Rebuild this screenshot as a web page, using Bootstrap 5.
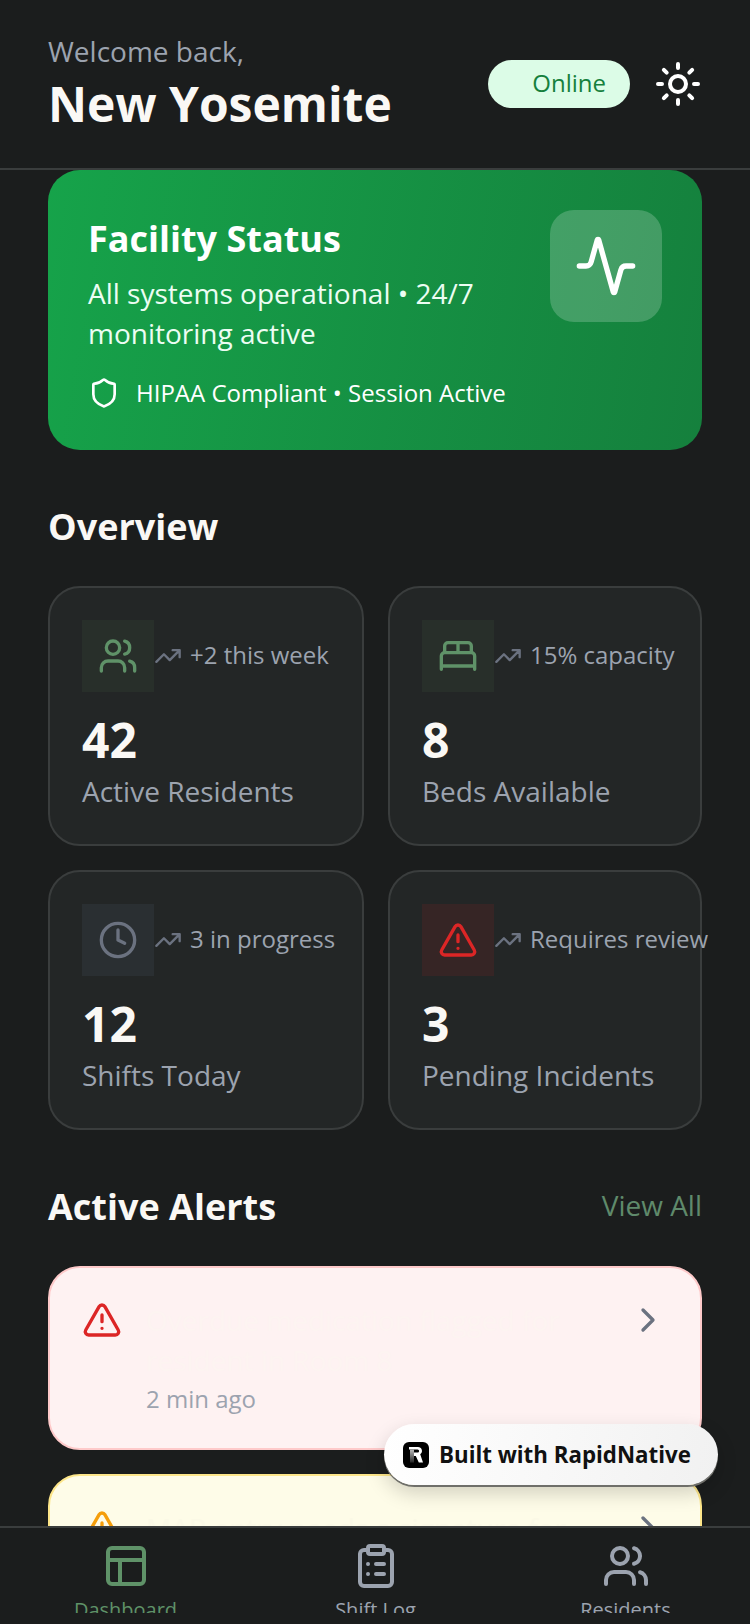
<!DOCTYPE html>
<html lang="en">
<head>
    <meta charset="UTF-8">
    <meta name="viewport" content="width=device-width, initial-scale=1.0">
    <title>New Yosemite Dashboard</title>
    <link rel="stylesheet" href="https://cdn.jsdelivr.net/npm/bootstrap@5.3.0/dist/css/bootstrap.min.css">
    <style>
        body { background: #1b1d1d; font-family: "Open Sans", sans-serif; color: #faf8f5; }
        svg.ico { fill: none; stroke: currentColor; stroke-width: 2; stroke-linecap: round; stroke-linejoin: round; flex-shrink: 0; display: block; }
        .app-shell { height: 1624px; overflow: hidden; }
        .top-head { height: 170px; padding: 31px 48px 0; border-bottom: 2px solid #3a3d3d; }
        .welcome { font-size: 28px; line-height: 40px; color: #9ca3af; }
        .site-name { font-size: 48px; line-height: 66px; font-weight: 700; margin: 0; }
        .head-right { margin-top: 29px; }
        .online-pill { width: 142px; height: 48px; border-radius: 24px; background: #dcfce7; color: #15803d; font-size: 24px; line-height: 46px; text-align: right; padding-right: 24px; }
        .theme-ico { color: #fff; margin-left: 24px; }
        .scroll-area { padding: 0 48px; min-height: 0; }
        .hero { height: 280px; padding: 40px; border-radius: 32px; background: linear-gradient(100deg, #16a34a, #15803d); color: #fff; }
        .hero h2 { font-size: 36px; line-height: 58px; font-weight: 700; margin: 0 0 5px; }
        .hero p { font-size: 28px; line-height: 40px; margin: 0; color: #ecfdf3; }
        .hero-ico { width: 112px; height: 112px; border-radius: 24px; background: rgba(255,255,255,.2); }
        .hipaa { margin-top: 24px; font-size: 24px; line-height: 32px; gap: 16px; }
        .sec-title { font-size: 36px; line-height: 48px; font-weight: 700; margin: 0; }
        .sec-head { margin-top: 53px; margin-bottom: 35px; }
        .stat-grid { display: grid; grid-template-columns: 316px 314px; gap: 24px; }
        .stat-box { height: 260px; padding: 32px; border: 2px solid #3a3d3d; border-radius: 32px; background: #232626; }
        .stat-ico { width: 72px; height: 72px; }
        .tint-green { background: #282f2a; color: #5f9268; }
        .tint-gray { background: #2a2f32; color: #6b7280; }
        .tint-red { background: #362525; color: #dc2626; }
        .trend { color: #6b7280; }
        .trend-text { font-size: 24px; line-height: 32px; color: #9ca3af; margin-left: 8px; margin-bottom: 2px; white-space: nowrap; }
        .stat-num { font-size: 48px; line-height: 64px; font-weight: 700; margin-top: 16px; }
        .stat-label { font-size: 28px; line-height: 40px; color: #9ca3af; margin-top: -1px; }
        .view-all { font-size: 28px; color: #5f8a6b; text-decoration: none; margin-bottom: 4px; }
        .alert-box { padding: 32px; border: 2px solid; border-radius: 32px; margin-bottom: 24px; }
        .alert-red { background: #fef2f2; border-color: #fecaca; color: #dc2626; }
        .alert-amber { background: #fefce8; border-color: #fde68a; color: #f59e0b; }
        .alert-title { font-size: 28px; line-height: 40px; }
        .alert-red .alert-title { color: #fdf4f1; }
        .alert-amber .alert-title { color: #fbf9e6; }
        .alert-time { font-size: 24px; line-height: 32px; color: #9ca3af; margin-top: 3px; margin-bottom: 1px; }
        .alert-chev { color: #6b7280; }
        .tab-bar { height: 98px; border-top: 2px solid #3a3d3d; background: #1b1d1d; flex-shrink: 0; }
        .tab-inner { height: 85px; overflow: hidden; padding: 14px 0 0 1px; }
        .tab-item { width: 249px; color: #9ca3af; font-size: 20px; line-height: 28px; }
        .tab-item.is-on { color: #5f9268; }
        .tab-item span { margin-top: 6px; }
        .built-badge { position: absolute; left: 384px; top: 1424px; width: 334px; height: 61px; border-radius: 31px; background: linear-gradient(100deg, #fff, #f1f1f1); box-shadow: 0 2px 0 #6f6f6a, 0 8px 20px rgba(0,0,0,.18); color: #111; font-size: 22.3px; font-weight: 700; gap: 10px; padding-left: 19px; }
        .built-logo { width: 26px; height: 26px; border-radius: 6px; background: #000; }
    </style>
</head>
<body>
    <div class="app-shell d-flex flex-column position-relative">
        <header class="top-head d-flex justify-content-between align-items-start flex-shrink-0">
            <div>
                <div class="welcome">Welcome back,</div>
                <h1 class="site-name">New Yosemite</h1>
            </div>
            <div class="head-right d-flex align-items-center">
                <div class="online-pill">Online</div>
                <svg class="ico theme-ico" width="48" height="48" viewBox="0 0 24 24"><circle cx="12" cy="12" r="4"/><path d="M12 2v2M12 20v2M4.93 4.93l1.41 1.41M17.66 17.66l1.41 1.41M2 12h2M20 12h2M6.34 17.66l-1.41 1.41M19.07 4.93l-1.41 1.41"/></svg>
            </div>
        </header>

        <main class="scroll-area flex-grow-1 overflow-hidden">
            <section class="hero d-flex justify-content-between align-items-start">
                <div>
                    <h2>Facility Status</h2>
                    <p>All systems operational • 24/7 monitoring active</p>
                    <div class="hipaa d-flex align-items-center">
                        <svg class="ico" width="32" height="32" viewBox="0 0 24 24"><path d="M20 13c0 5-3.5 7.5-7.66 8.95a1 1 0 0 1-.67-.01C7.5 20.5 4 18 4 13V6a1 1 0 0 1 1-1c2 0 4.5-1.2 6.24-2.72a1.17 1.17 0 0 1 1.52 0C14.51 3.81 17 5 19 5a1 1 0 0 1 1 1z"/></svg>
                        HIPAA Compliant • Session Active
                    </div>
                </div>
                <div class="hero-ico d-flex align-items-center justify-content-center flex-shrink-0">
                    <svg class="ico" width="64" height="64" viewBox="0 0 24 24"><path d="M22 12h-2.48a2 2 0 0 0-1.93 1.46l-2.35 8.36a.25.25 0 0 1-.48 0L9.24 2.18a.25.25 0 0 0-.48 0l-2.35 8.36A2 2 0 0 1 4.49 12H2"/></svg>
                </div>
            </section>

            <div class="sec-head"><h2 class="sec-title">Overview</h2></div>
            <div class="stat-grid">
                <div class="stat-box">
                    <div class="d-flex align-items-center">
                        <div class="stat-ico tint-green d-flex align-items-center justify-content-center flex-shrink-0">
                            <svg class="ico" width="40" height="40" viewBox="0 0 24 24"><path d="M16 21v-2a4 4 0 0 0-4-4H6a4 4 0 0 0-4 4v2"/><circle cx="9" cy="7" r="4"/><path d="M22 21v-2a4 4 0 0 0-3-3.87M16 3.13a4 4 0 0 1 0 7.75"/></svg>
                        </div>
                        <svg class="ico trend" width="28" height="28" viewBox="0 0 24 24"><path d="M22 7l-8.5 8.5-5-5L2 17M16 7h6v6"/></svg>
                        <span class="trend-text">+2 this week</span>
                    </div>
                    <div class="stat-num">42</div>
                    <div class="stat-label">Active Residents</div>
                </div>
                <div class="stat-box">
                    <div class="d-flex align-items-center">
                        <div class="stat-ico tint-green d-flex align-items-center justify-content-center flex-shrink-0">
                            <svg class="ico" width="40" height="40" viewBox="0 0 24 24"><path d="M2 20v-8a2 2 0 0 1 2-2h16a2 2 0 0 1 2 2v8M4 10V6a2 2 0 0 1 2-2h12a2 2 0 0 1 2 2v4M12 4v6M2 18h20"/></svg>
                        </div>
                        <svg class="ico trend" width="28" height="28" viewBox="0 0 24 24"><path d="M22 7l-8.5 8.5-5-5L2 17M16 7h6v6"/></svg>
                        <span class="trend-text">15% capacity</span>
                    </div>
                    <div class="stat-num">8</div>
                    <div class="stat-label">Beds Available</div>
                </div>
                <div class="stat-box">
                    <div class="d-flex align-items-center">
                        <div class="stat-ico tint-gray d-flex align-items-center justify-content-center flex-shrink-0">
                            <svg class="ico" width="40" height="40" viewBox="0 0 24 24"><circle cx="12" cy="12" r="10"/><path d="M12 6v6l4 2"/></svg>
                        </div>
                        <svg class="ico trend" width="28" height="28" viewBox="0 0 24 24"><path d="M22 7l-8.5 8.5-5-5L2 17M16 7h6v6"/></svg>
                        <span class="trend-text">3 in progress</span>
                    </div>
                    <div class="stat-num">12</div>
                    <div class="stat-label">Shifts Today</div>
                </div>
                <div class="stat-box">
                    <div class="d-flex align-items-center">
                        <div class="stat-ico tint-red d-flex align-items-center justify-content-center flex-shrink-0">
                            <svg class="ico" width="40" height="40" viewBox="0 0 24 24"><path d="M21.73 18l-8-14a2 2 0 0 0-3.48 0l-8 14A2 2 0 0 0 4 21h16a2 2 0 0 0 1.73-3M12 9v4M12 17h.01"/></svg>
                        </div>
                        <svg class="ico trend" width="28" height="28" viewBox="0 0 24 24"><path d="M22 7l-8.5 8.5-5-5L2 17M16 7h6v6"/></svg>
                        <span class="trend-text">Requires review</span>
                    </div>
                    <div class="stat-num">3</div>
                    <div class="stat-label">Pending Incidents</div>
                </div>
            </div>

            <div class="sec-head d-flex justify-content-between align-items-center">
                <h2 class="sec-title">Active Alerts</h2>
                <a class="view-all" href="#">View All</a>
            </div>
            <div class="alert-box alert-red d-flex align-items-start">
                <svg class="ico" width="40" height="40" viewBox="0 0 24 24"><path d="M21.73 18l-8-14a2 2 0 0 0-3.48 0l-8 14A2 2 0 0 0 4 21h16a2 2 0 0 0 1.73-3M12 9v4M12 17h.01"/></svg>
                <div class="flex-grow-1 ms-4 me-2">
                    <div class="alert-title">Overdue medication flagged for resident in Room 8</div>
                    <div class="alert-time">2 min ago</div>
                </div>
                <svg class="ico alert-chev" width="40" height="40" viewBox="0 0 24 24"><path d="M9 18l6-6-6-6"/></svg>
            </div>
            <div class="alert-box alert-amber d-flex align-items-start">
                <svg class="ico" width="40" height="40" viewBox="0 0 24 24"><path d="M21.73 18l-8-14a2 2 0 0 0-3.48 0l-8 14A2 2 0 0 0 4 21h16a2 2 0 0 0 1.73-3M12 9v4M12 17h.01"/></svg>
                <div class="flex-grow-1 ms-4 me-2">
                    <div class="alert-title">MAR entry needs a signature for Room 3</div>
                </div>
                <svg class="ico alert-chev" width="40" height="40" viewBox="0 0 24 24"><path d="M9 18l6-6-6-6"/></svg>
            </div>
        </main>

        <nav class="tab-bar">
            <div class="tab-inner d-flex justify-content-between">
                <div class="tab-item is-on d-flex flex-column align-items-center">
                    <svg class="ico" width="48" height="48" viewBox="0 0 24 24"><rect x="3" y="3" width="18" height="18" rx="2"/><path d="M3 9h18M9 21V9"/></svg>
                    <span>Dashboard</span>
                </div>
                <div class="tab-item d-flex flex-column align-items-center">
                    <svg class="ico" width="48" height="48" viewBox="0 0 24 24"><rect x="8" y="2" width="8" height="4" rx="1"/><path d="M16 4h2a2 2 0 0 1 2 2v14a2 2 0 0 1-2 2H6a2 2 0 0 1-2-2V6a2 2 0 0 1 2-2h2M12 11h4M12 16h4M8 11h.01M8 16h.01"/></svg>
                    <span>Shift Log</span>
                </div>
                <div class="tab-item d-flex flex-column align-items-center">
                    <svg class="ico" width="48" height="48" viewBox="0 0 24 24"><path d="M16 21v-2a4 4 0 0 0-4-4H6a4 4 0 0 0-4 4v2"/><circle cx="9" cy="7" r="4"/><path d="M22 21v-2a4 4 0 0 0-3-3.87M16 3.13a4 4 0 0 1 0 7.75"/></svg>
                    <span>Residents</span>
                </div>
            </div>
        </nav>

        <div class="built-badge d-flex align-items-center">
            <div class="built-logo d-flex align-items-center justify-content-center flex-shrink-0">
                <svg width="16" height="18" viewBox="0 0 16 18"><defs><linearGradient id="rFade" x1="0" y1="0" x2="0" y2="1"><stop offset="0" stop-color="#bbb"/><stop offset="1" stop-color="#222"/></linearGradient></defs><path d="M1 1h9a4 4 0 0 1 2.2 7.3L15 16.5h-4.2L7.8 10H6V6.6h3.6a1.5 1.5 0 0 0 0-3H1z" fill="#fff"/><path d="M2 3.6h4v13H2z" fill="url(#rFade)"/></svg>
            </div>
            Built with RapidNative
        </div>
    </div>
    <script src="https://cdn.jsdelivr.net/npm/bootstrap@5.3.0/dist/js/bootstrap.bundle.min.js"></script>
</body>
</html>
